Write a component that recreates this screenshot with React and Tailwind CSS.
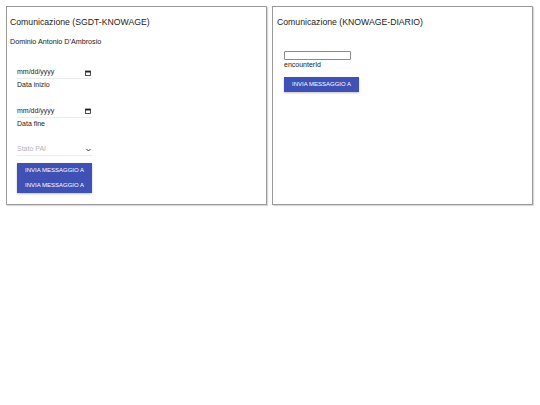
import React from 'react'

function Button({ children, className = '' }) {
  return (
    <button
      className={`h-[15px] w-[75px] bg-[#3f51b5] text-white text-[6px] uppercase flex items-center justify-center ${className}`}
    >
      {children}
    </button>
  )
}

function DateField({ label }) {
  return (
    <div className="flex flex-col w-[75px]">
      <div className="flex items-center justify-between h-[12px] border-b border-[#ececec] text-[7px] text-[#222]">
        <span>mm/dd/yyyy</span>
        <svg width="6" height="6" viewBox="0 0 12 12" className="mr-[1px]">
          <rect x="1" y="2" width="10" height="9" fill="none" stroke="#222" strokeWidth="1.6" />
          <rect x="1" y="2" width="10" height="3" fill="#222" />
        </svg>
      </div>
      <span className="text-[7px] text-[#222] mt-[1px]">{label}</span>
    </div>
  )
}

export default function App() {
  return (
    <div className="w-[540px] h-[405px] bg-white p-[6px] flex gap-[5px] items-start font-['Liberation_Sans',Arial,sans-serif] text-[#222]">
      <div className="w-[261px] h-[199px] border border-[#9a9a9a] shadow-[1px_1px_1px_rgba(0,0,0,0.15)] px-[3px] pt-[9px]">
        <h2 className="text-[8.7px] leading-[12px]">Comunicazione (SGDT-KNOWAGE)</h2>
        <p className="text-[7.2px] leading-[9px] mt-[9px]">Dominio Antonio D'Ambrosio</p>
        <div className="pl-[7px] flex flex-col">
          <div className="mt-[21px]">
            <DateField label="Data inizio" />
          </div>
          <div className="mt-[15px]">
            <DateField label="Data fine" />
          </div>
          <div className="mt-[15px] w-[75px] h-[12px] border-b border-[#ececec] flex items-center justify-between text-[7px] text-[#b5b5b5]">
            <span>Stato PAI</span>
            <svg width="5" height="4" viewBox="0 0 10 6" className="mr-[1px]">
              <path d="M1 1 L5 5 L9 1" fill="none" stroke="#333" strokeWidth="2" />
            </svg>
          </div>
          <div className="mt-[7px] flex flex-col shadow-[0_1px_2px_rgba(0,0,0,0.25)] w-[75px]">
            <Button>Invia messaggio a</Button>
            <Button>Invia messaggio a</Button>
          </div>
        </div>
      </div>
      <div className="w-[261px] h-[199px] border border-[#9a9a9a] shadow-[1px_1px_1px_rgba(0,0,0,0.15)] px-[4px] pt-[9px]">
        <h2 className="text-[8.7px] leading-[12px]">Comunicazione (KNOWAGE-DIARIO)</h2>
        <div className="pl-[7px] flex flex-col mt-[23px]">
          <div className="w-[67px] h-[9px] border border-[#8a8a8a] rounded-[1px]" />
          <span className="text-[7px] leading-[9px]">encounterId</span>
          <Button className="mt-[8px] shadow-[0_1px_2px_rgba(0,0,0,0.25)]">Invia messaggio a</Button>
        </div>
      </div>
    </div>
  )
}
